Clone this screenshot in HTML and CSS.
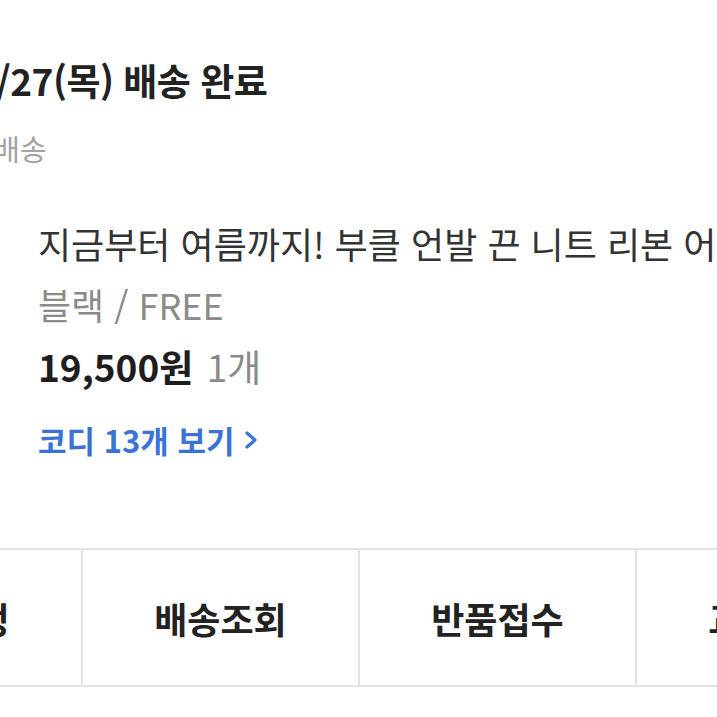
FILE: index.html
```html
<!DOCTYPE html>
<html lang="ko">
<head>
<meta charset="utf-8">
<link rel="stylesheet" href="styles.css">
</head>
<body>
<div class="screen">
  <section class="head">
    <h1 class="status">7/27(목) 배송 완료</h1>
    <p class="ship">일반배송</p>
  </section>
  <section class="product">
    <p class="name">지금부터 여름까지! 부클 언발 끈 니트 리본 어깨 블라우스</p>
    <p class="option">블랙 / FREE</p>
    <p class="price"><strong>19,500원</strong> <span class="qty">1개</span></p>
    <a class="codi" href="#">코디 13개 보기 <svg class="chev" width="14" height="22" viewBox="0 0 14 22"><path d="M3 4 L11 11 L3 18" fill="none" stroke="#3a72d8" stroke-width="3.2" stroke-linecap="round" stroke-linejoin="round"/></svg></a>
  </section>
  <div class="actions">
    <div class="btn">구매확정</div>
    <div class="btn">배송조회</div>
    <div class="btn">반품접수</div>
    <div class="btn">교환접수</div>
  </div>
</div>
</body>
</html>
```
FILE: styles.css
```css
html, body {
  margin: 0;
  padding: 0;
  background: #fff;
}
body {
  font-family: "Noto Sans CJK KR", "Noto Sans", sans-serif;
  color: #222;
  width: 717px;
  height: 717px;
  overflow: hidden;
}
.screen {
  width: 717px;
  overflow: hidden;
}
.head {
  padding-top: 58px;
  margin-left: -25px;
}
.status {
  margin: 0;
  font-size: 37px;
  line-height: 44px;
  font-weight: 700;
  color: #222;
  white-space: nowrap;
  letter-spacing: -0.5px;
}
.ship {
  margin: 28px 0 0 -35px;
  font-size: 29px;
  line-height: 36px;
  color: #a3a3a3;
  white-space: nowrap;
}
.product {
  padding-left: 38px;
  margin-top: 53px;
}
.product p {
  margin: 0;
  white-space: nowrap;
}
.name {
  font-size: 36px;
  line-height: 48px;
  color: #333;
}
.option {
  margin-top: 13px !important;
  font-size: 36px;
  line-height: 48px;
  color: #8a8a8a;
}
.price {
  margin-top: 14px !important;
  font-size: 37px;
  line-height: 48px;
}
.price strong {
  font-weight: 700;
  color: #1e1e1e;
}
.qty {
  color: #8a8a8a;
  margin-left: 3px;
}
.codi {
  display: flex;
  align-items: center;
  gap: 9px;
  margin-top: 30px;
  font-size: 31px;
  line-height: 40px;
  font-weight: 700;
  color: #3a72d8;
  text-decoration: none;
}
.chev {
  display: block;
}
.actions {
  display: flex;
  margin-top: 88px;
  margin-left: -194px;
  border-top: 2px solid #e2e2e2;
  border-bottom: 2px solid #e2e2e2;
  width: max-content;
}
.btn {
  width: 275px;
  height: 135px;
  display: flex;
  align-items: center;
  justify-content: center;
  font-size: 36px;
  font-weight: 700;
  color: #222;
  border-left: 2px solid #e2e2e2;
  flex-shrink: 0;
}
.btn:first-child {
  border-left: none;
}
```
